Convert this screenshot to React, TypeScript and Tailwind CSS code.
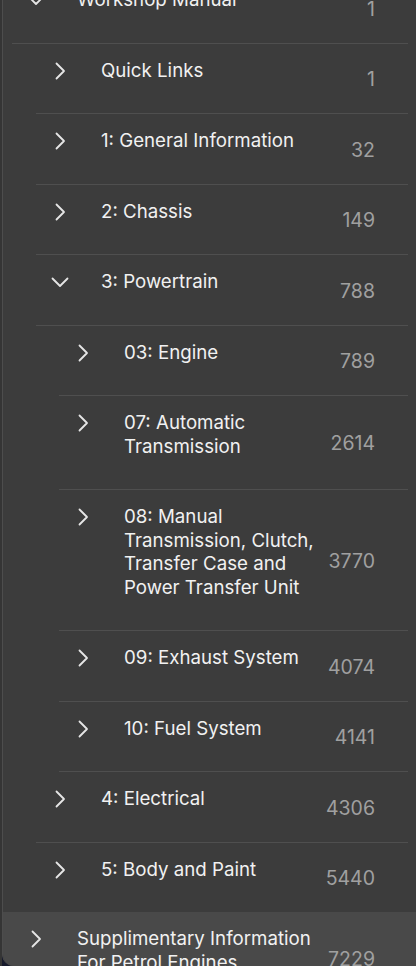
import React from 'react';

type Node = {
  title: string;
  page: number;
  level: number;
  open?: boolean;
  divider?: boolean;
};

const rows: Node[] = [
  { title: 'Workshop Manual', page: 1, level: 0, open: true },
  { title: 'Quick Links', page: 1, level: 1 },
  { title: '1: General Information', page: 32, level: 1 },
  { title: '2: Chassis', page: 149, level: 1 },
  { title: '3: Powertrain', page: 788, level: 1, open: true },
  { title: '03: Engine', page: 789, level: 2 },
  { title: '07: Automatic Transmission', page: 2614, level: 2 },
  { title: '08: Manual Transmission, Clutch, Transfer Case and Power Transfer Unit', page: 3770, level: 2 },
  { title: '09: Exhaust System', page: 4074, level: 2 },
  { title: '10: Fuel System', page: 4141, level: 2 },
  { title: '4: Electrical', page: 4306, level: 1 },
  { title: '5: Body and Paint', page: 5440, level: 1, divider: false },
];

const indents = ['pl-[9px]', 'pl-[33px]', 'pl-[56px]'];

function Chevron({ open }: { open?: boolean }) {
  if (open) {
    return (
      <svg width="18" height="11" viewBox="0 0 18 11" fill="none">
        <polyline points="1.5,1.5 9,9 16.5,1.5" stroke="#e6e6e6" strokeWidth="1.8" strokeLinecap="round" strokeLinejoin="round" />
      </svg>
    );
  }
  return (
    <svg width="11" height="18" viewBox="0 0 11 18" fill="none">
      <polyline points="1.5,1.5 9,9 1.5,16.5" stroke="#e6e6e6" strokeWidth="1.8" strokeLinecap="round" strokeLinejoin="round" />
    </svg>
  );
}

function Row({ node }: { node: Node }) {
  const last = node.divider === false;
  return (
    <div className={indents[node.level]}>
      <div className={`flex ${last ? '' : 'border-b border-[#4f4f4f]'}`}>
        <div className="w-[48px] h-[24px] mt-[15px] mr-[17px] flex items-center justify-center shrink-0">
          <Chevron open={node.open} />
        </div>
        <div className="flex-1 min-w-0 pt-[15px] pb-[31px] text-[18.7px] leading-[23.5px] text-[#f1f1f1]">
          {node.title}
        </div>
        <div className="w-[90px] shrink-0 flex items-center justify-end pr-[33px] pt-[3px] text-[19.5px] text-[#a0a0a0]">
          {node.page}
        </div>
      </div>
    </div>
  );
}

export default function App() {
  return (
    <div className="w-[416px] h-[966px] overflow-hidden bg-[#171a2c] flex font-['Inter',sans-serif]">
      <div className="w-[2px] shrink-0 bg-[#353535]" />
      <div className="flex-1 flex flex-col bg-[#3c3c3c] border-l border-[#4d4d4d] rounded-bl-[12px] overflow-hidden">
        <div className="mt-[-27px] pr-[8px]">
          {rows.map((r, i) => (
            <Row key={i} node={r} />
          ))}
        </div>
        <div className="flex-1 bg-[#494949] pr-[8px]">
          <Row node={{ title: 'Supplimentary Information For Petrol Engines', page: 7229, level: 0, divider: false }} />
        </div>
      </div>
    </div>
  );
}
